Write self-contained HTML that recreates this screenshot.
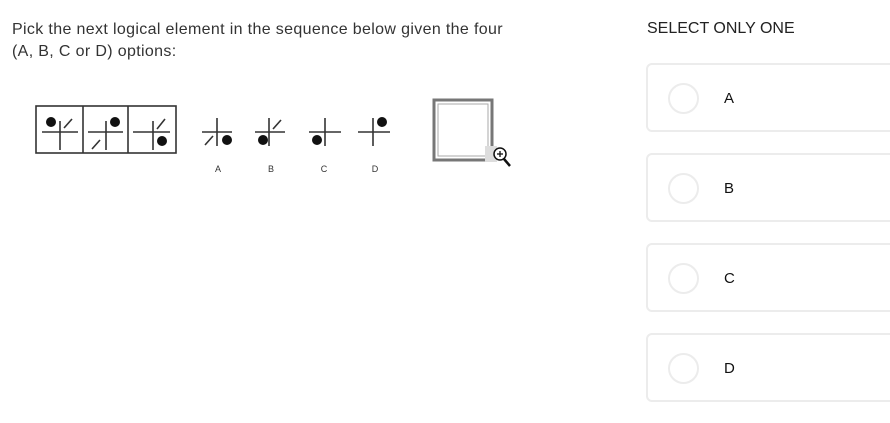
<!DOCTYPE html>
<html><head><meta charset="utf-8"><style>
body{margin:0;width:890px;height:423px;background:#fff;font-family:"Liberation Sans",sans-serif;color:#333;position:relative;overflow:hidden}
.q{position:absolute;left:12px;top:19px;font-size:16px;letter-spacing:0.35px;line-height:22px;width:560px}
.h{position:absolute;left:647px;top:20px;font-size:16px;color:#222}
.card{position:absolute;left:646px;width:260px;height:69px;border:2px solid #ececec;border-radius:6px;box-sizing:border-box}
.card .r{position:absolute;left:20px;top:18px;width:31px;height:31px;border:2px solid #ececec;border-radius:50%;box-sizing:border-box}
.card .l{position:absolute;left:76px;top:25px;font-size:15px;color:#111}
svg{position:absolute;left:0;top:0}
</style></head><body>
<div class="q">Pick the next logical element in the sequence below given the four<br>(A, B, C or D) options:</div>
<div class="h">SELECT ONLY ONE</div>
<div class="card" style="top:63px"><div class="r"></div><div class="l">A</div></div>
<div class="card" style="top:153px"><div class="r"></div><div class="l">B</div></div>
<div class="card" style="top:243px"><div class="r"></div><div class="l">C</div></div>
<div class="card" style="top:333px"><div class="r"></div><div class="l">D</div></div>
<svg width="600" height="200" viewBox="0 0 600 200">
<g stroke="#333" stroke-width="1.6" fill="none">
<rect x="36" y="106" width="140" height="47"/>
<line x1="83" y1="106" x2="83" y2="153"/><line x1="128" y1="106" x2="128" y2="153"/>
<line x1="42" y1="132" x2="78" y2="132"/><line x1="60" y1="121" x2="60" y2="150"/><line x1="64" y1="128" x2="72" y2="119"/>
<line x1="88" y1="132" x2="123" y2="132"/><line x1="106" y1="121" x2="106" y2="150"/><line x1="92" y1="149" x2="100" y2="140"/>
<line x1="133" y1="132" x2="170" y2="132"/><line x1="153" y1="121" x2="153" y2="150"/><line x1="157" y1="129" x2="165" y2="119"/>
<line x1="202" y1="132" x2="232" y2="132"/><line x1="217" y1="118" x2="217" y2="146"/><line x1="205" y1="145" x2="213" y2="136"/>
<line x1="255" y1="132" x2="285" y2="132"/><line x1="269" y1="118" x2="269" y2="146"/><line x1="273" y1="129" x2="281" y2="120"/>
<line x1="309" y1="132" x2="341" y2="132"/><line x1="325" y1="118" x2="325" y2="146"/>
<line x1="358" y1="132" x2="390" y2="132"/><line x1="373" y1="118" x2="373" y2="146"/>
</g>
<g fill="#111">
<circle cx="51" cy="122" r="5"/><circle cx="115" cy="122" r="5"/><circle cx="162" cy="141" r="5"/>
<circle cx="227" cy="140" r="5"/><circle cx="263" cy="140" r="5"/><circle cx="317" cy="140" r="5"/><circle cx="382" cy="122" r="5"/>
</g>
<g font-family="Liberation Sans,sans-serif" font-size="9" fill="#333" text-anchor="middle">
<text x="218" y="172">A</text><text x="271" y="172">B</text><text x="324" y="172">C</text><text x="375" y="172">D</text>
</g>
<rect x="434" y="100" width="58" height="60" fill="none" stroke="#777" stroke-width="3"/>
<rect x="438" y="104" width="50" height="52" fill="none" stroke="#aaa" stroke-width="1"/>
<rect x="485" y="146" width="12" height="16" fill="#ddd"/>
<circle cx="500" cy="154" r="6" fill="#fff" stroke="#111" stroke-width="1.5"/>
<line x1="497" y1="154" x2="503" y2="154" stroke="#111" stroke-width="1.3"/><line x1="500" y1="151" x2="500" y2="157" stroke="#111" stroke-width="1.3"/>
<line x1="504" y1="159" x2="510" y2="166" stroke="#111" stroke-width="2.5"/>
</svg>
</body></html>
